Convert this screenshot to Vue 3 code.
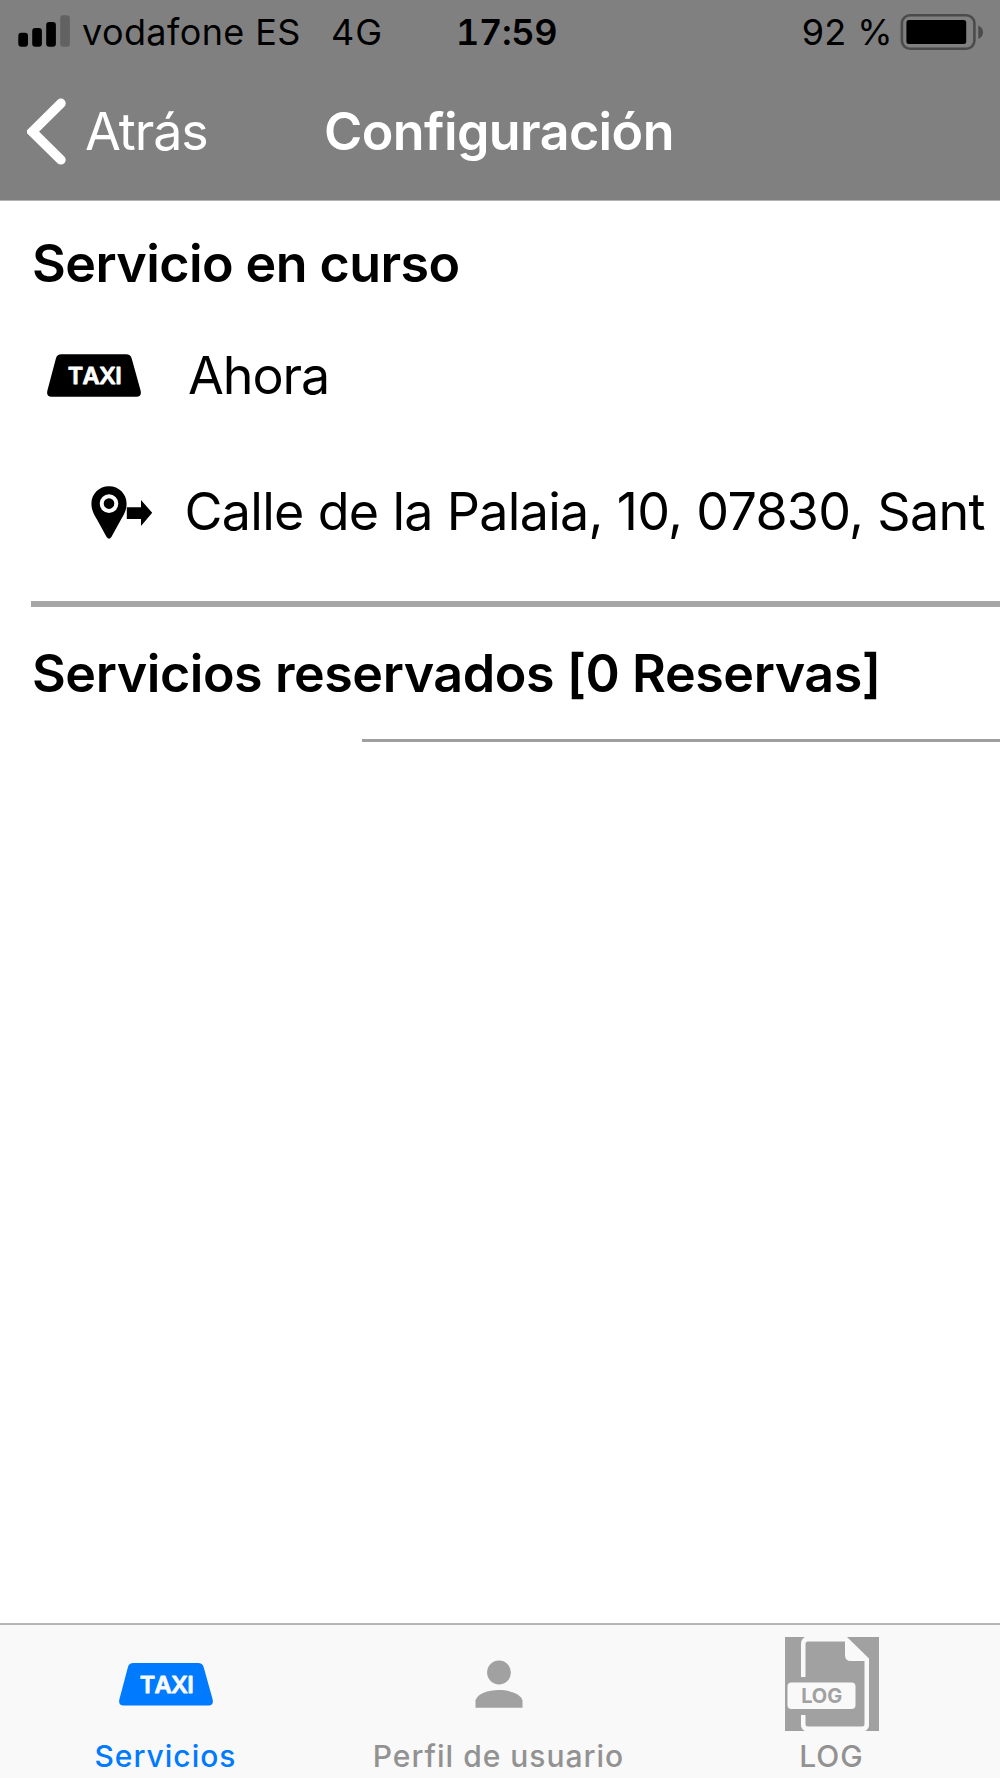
<script setup>
import {ref} from "vue";

const address = ref('Calle de la Palaia, 10, 07830, Sant')
const reservations = ref(0)
const battery = ref(92)
const activeTab = ref('services')

function selectTab(tab) {
  activeTab.value = tab
}
</script>
<template>
  <div class="page">
    <header class="header">
      <div class="status-bar">
        <div class="status-left">
          <svg class="signal" width="52" height="34" viewBox="0 0 52 34">
            <rect x="0.3" y="18.8" width="9.7" height="14" rx="3"/>
            <rect x="14.2" y="14" width="9.7" height="18.8" rx="3"/>
            <rect x="28.2" y="8" width="9.7" height="24.8" rx="3"/>
            <rect x="42.2" y="1.3" width="9.7" height="31.5" rx="3" fill="#626262"/>
          </svg>
          <span class="carrier">vodafone ES</span>
          <span class="network">4G</span>
        </div>
        <span class="time">17:59</span>
        <div class="status-right">
          <span class="percent">{{ battery }} %</span>
          <svg class="battery" width="84" height="36" viewBox="0 0 84 36">
            <rect x="1.9" y="1.3" width="72.5" height="33.4" rx="8" fill="none" stroke="#4b4b4b" stroke-width="2.6"/>
            <rect x="6.4" y="6" width="59.8" height="24" rx="2.5"/>
            <path d="M78.3 11.5 C84.6 14 84.6 22.5 78.3 25 Z" fill="#4b4b4b"/>
          </svg>
        </div>
      </div>
      <nav class="nav-bar">
        <a class="back" href="#">
          <svg width="40" height="68" viewBox="0 0 40 68">
            <path d="M33.9 5.4 L5.3 33.7 L33.9 61.8" fill="none" stroke="#fff" stroke-width="9.6"
                  stroke-linecap="round" stroke-linejoin="miter"/>
          </svg>
          <span>Atrás</span>
        </a>
        <h1>Configuración</h1>
      </nav>
    </header>

    <main class="content">
      <h2 class="current-title">Servicio en curso</h2>
      <div class="row-now">
        <svg class="taxi" width="94" height="43" viewBox="0 0 94 43">
          <path d="M14.5 0.3 H79 Q83.5 0.3 84.7 4.5 L93.6 36.5 Q95 42.5 89.5 42.7 H4.5 Q-1 42.5 0.4 36.5 L8.9 4.5 Q10 0.3 14.5 0.3 Z"/>
          <text x="20.7" y="30" textLength="54">TAXI</text>
        </svg>
        <span>Ahora</span>
      </div>
      <div class="row-address">
        <svg class="pin" width="62" height="54" viewBox="0 0 62 54">
          <path d="M18 0.3 C8 0.3 0.4 8 0.4 17.7 C0.4 24 3 28.5 6 33.5 L15.6 51 Q18 54.5 20.4 51 L30 33.5 C33 28.5 35.6 24 35.6 17.7 C35.6 8 28 0.3 18 0.3 Z"/>
          <circle cx="18" cy="17.6" r="7.3" fill="none" stroke="#fff" stroke-width="4"/>
          <path d="M35.8 21.3 H50 V14 L61.2 26.8 L50 40 V33 H35.8 Z"/>
        </svg>
        <span>{{ address }}</span>
      </div>
      <div class="divider"></div>
      <h2 class="reserved-title">Servicios reservados [{{ reservations }} Reservas]</h2>
      <div class="thin-divider"></div>
    </main>

    <footer class="tab-bar">
      <div class="tab" :class="{active: activeTab === 'services'}" @click="selectTab('services')">
        <svg class="taxi" width="94" height="94" viewBox="0 -25.7 94 94">
          <path d="M14.5 0.3 H79 Q83.5 0.3 84.7 4.5 L93.6 36.5 Q95 42.5 89.5 42.7 H4.5 Q-1 42.5 0.4 36.5 L8.9 4.5 Q10 0.3 14.5 0.3 Z"/>
          <text x="20.7" y="30" textLength="54">TAXI</text>
        </svg>
        <span>Servicios</span>
      </div>
      <div class="tab" :class="{active: activeTab === 'profile'}" @click="selectTab('profile')">
        <svg width="94" height="94" viewBox="0 0 94 94">
          <circle cx="47" cy="35.5" r="11.9"/>
          <path d="M23.5 70.8 V63.5 C25 57 36 53 47 53 S69 57 70.5 63.5 V70.8 Z"/>
        </svg>
        <span>Perfil de usuario</span>
      </div>
      <div class="tab" :class="{active: activeTab === 'log'}" @click="selectTab('log')">
        <svg class="log" width="94" height="94" viewBox="0 0 94 94">
          <path d="M0 0 H94 V94 H0 Z"/>
          <path class="paper" d="M62 0 H20 Q16 2 16 7 V40 H20.5 V7 Q20.5 4.5 23 4.5 H60 V18 Q60 24 66 24 H79.5 V87 Q79.5 89.5 77 89.5 H23 Q20.5 89.5 20.5 87 V78 H16 V88 Q16 92 20 94 H80 Q84 92 84 88 V21.5 Z"/>
          <rect class="paper" x="2.5" y="45.5" width="68" height="26.5" rx="4"/>
          <text x="16.2" y="66" textLength="41">LOG</text>
        </svg>
        <span>LOG</span>
      </div>
    </footer>
  </div>
</template>
<style>
body {
  margin: 0;
  background: #fff;
}
</style>
<style scoped>
.page {
  display: flex;
  flex-direction: column;
  width: 1000px;
  height: 1778px;
  overflow: hidden;
  background: #fff;
  color: #000;
  font-family: Inter, "Liberation Sans", sans-serif;
}

svg {
  display: block;
  flex-shrink: 0;
}

.header {
  height: 200px;
  background: #808080;
  border-bottom: 1px solid #b4b4b4;
}

.status-bar {
  display: grid;
  grid-template-columns: 456px 150px 1fr;
  align-items: center;
  height: 64px;
  font-size: 36px;
  line-height: 64px;
  white-space: nowrap;
}

.status-left {
  display: flex;
  align-items: center;
  padding-left: 18px;
}

.signal {
  margin-top: -3px;
}

.carrier {
  margin-left: 12px;
  width: 249px;
  letter-spacing: 0.4px;
}

.network {
  letter-spacing: 1px;
}

.time {
  font-weight: 600;
  font-variant-numeric: tabular-nums;
  letter-spacing: -0.3px;
}

.status-right {
  display: flex;
  align-items: center;
  justify-content: flex-end;
  padding-right: 16px;
}

.percent {
  margin-right: 7px;
  letter-spacing: 0.4px;
}

.nav-bar {
  display: grid;
  grid-template-columns: 324px 1fr;
  align-items: center;
  height: 136px;
  color: #fff;
  font-size: 52px;
  line-height: 136px;
}

.back {
  display: flex;
  align-items: center;
  gap: 18px;
  padding-left: 27px;
  color: #fff;
  text-decoration: none;
  letter-spacing: -1.1px;
}

.back svg {
  margin-top: -1px;
}

.nav-bar h1 {
  margin: 0;
  font-size: 52px;
  font-weight: 600;
  letter-spacing: -0.6px;
}

.content {
  flex: 1;
  font-size: 52px;
  white-space: nowrap;
}

.content h2 {
  margin: 0;
  padding-left: 32px;
  font-size: 52px;
  font-weight: 600;
}

.content .current-title {
  padding-top: 2px;
  line-height: 121px;
  letter-spacing: -0.58px;
}

.row-now {
  display: flex;
  align-items: center;
  gap: 47.5px;
  height: 102px;
  padding-left: 46.5px;
  line-height: 100px;
  letter-spacing: -1.1px;
}

.row-now span,
.row-address span {
  padding-top: 2px;
}

.row-address {
  display: flex;
  align-items: center;
  gap: 31.5px;
  height: 170px;
  padding-left: 91px;
  margin-bottom: 5px;
  line-height: 168px;
  letter-spacing: -0.69px;
}

.pin {
  margin-top: 4px;
}

.divider {
  height: 6px;
  margin-left: 31px;
  background: #a6a6a6;
}

.content .reserved-title {
  padding-top: 2px;
  line-height: 129px;
  letter-spacing: -0.45px;
}

.thin-divider {
  height: 3px;
  margin-top: 0.5px;
  margin-left: 362.4px;
  background: #9f9f9f;
}

.taxi text {
  fill: #fff;
  stroke: #fff;
  stroke-width: 0.8px;
  stroke-linejoin: round;
  font-size: 23.5px;
  font-weight: 600;
  font-kerning: none;
  letter-spacing: 0;
}

.tab-bar {
  display: grid;
  grid-template-columns: repeat(3, 1fr);
  box-sizing: border-box;
  height: 155px;
  padding-right: 1px;
  border-top: 2px solid #b6b6b6;
  background: #f9f9f9;
}

.tab {
  display: flex;
  flex-direction: column;
  align-items: center;
  padding-top: 12px;
  padding-right: 2px;
  color: #929292;
  font-size: 30px;
  font-weight: 500;
  line-height: 51px;
  letter-spacing: 1px;
  cursor: pointer;
}

.tab svg {
  fill: #a1a1a1;
}

.tab.active {
  color: #007aff;
}

.tab.active svg {
  fill: #007aff;
}

.tab .taxi text {
  fill: #f9f9f9;
  stroke: #f9f9f9;
}

.tab .paper {
  fill: #f9f9f9;
}

.log text {
  fill: #a1a1a1;
  font-size: 20px;
  font-weight: 700;
  letter-spacing: 0;
}
</style>
